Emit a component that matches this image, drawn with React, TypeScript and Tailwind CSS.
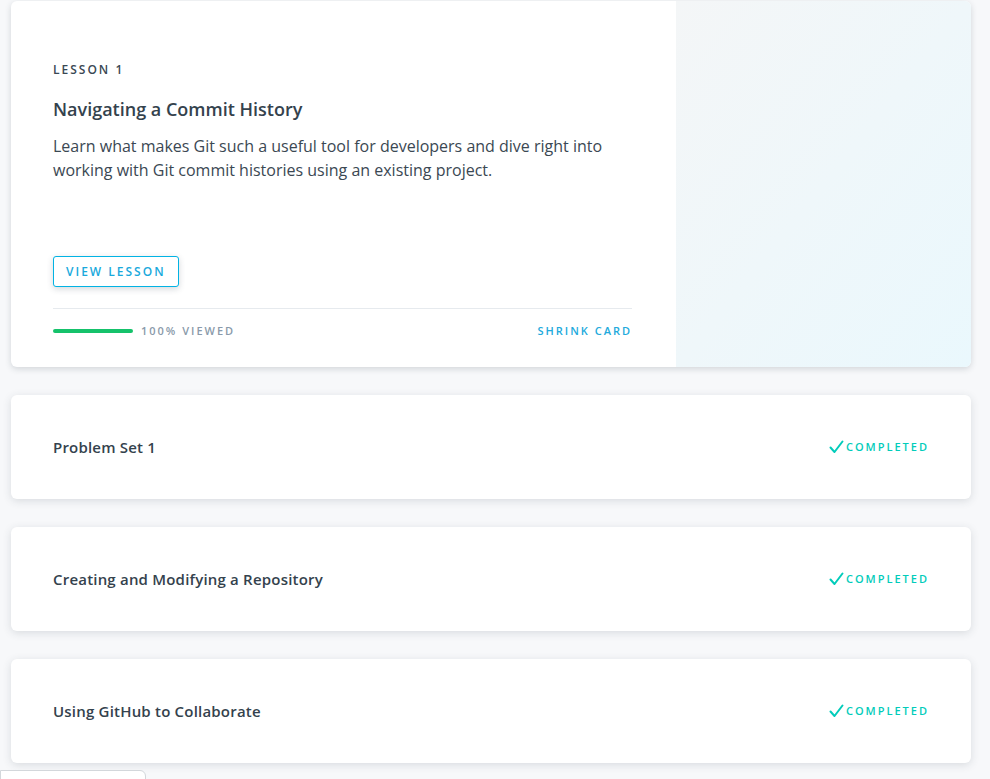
import React from "react";

const concepts = ["Problem Set 1", "Creating and Modifying a Repository", "Using GitHub to Collaborate"];

function CheckIcon() {
  return (
    <svg width="15" height="14" viewBox="0 0 15 14" fill="none" className="mr-[2px]">
      <path d="M1.5 7.5 L5.5 12 L13.5 1.5" stroke="#02ccba" strokeWidth="2" strokeLinecap="round" strokeLinejoin="round" />
    </svg>
  );
}

export default function App() {
  return (
    <div className="min-h-screen bg-[#f7f8fa] text-[#2e3d49]" style={{ fontFamily: '"Open Sans", "Noto Sans", sans-serif' }}>
      <div className="pt-px">
        {/* lesson card */}
        <div className="ml-[11px] w-[960px] h-[366px] flex bg-white rounded-md shadow-[0_2px_6px_rgba(46,61,73,0.18)] overflow-hidden">
          <div className="w-[665px] pl-[42px] pr-[44px] pt-[61px] flex flex-col">
            <p className="text-[12px] leading-4 font-semibold tracking-[2px] text-[#3a4853]">LESSON 1</p>
            <h2 className="mt-[19px] text-[18px] leading-6 font-semibold text-[#34424d]">Navigating a Commit History</h2>
            <p className="mt-[13px] text-[16px] leading-6 text-[#3b4853]">
              Learn what makes Git such a useful tool for developers and dive right into working with Git commit histories using an existing project.
            </p>
            <div className="mt-[74px]">
              <button className="h-[31px] px-3 border border-[#02b3e4] rounded-[3px] text-[12px] font-semibold tracking-[2px] text-[#19a9dc] bg-white shadow-[0_2px_6px_rgba(46,61,73,0.2)]">
                VIEW LESSON
              </button>
            </div>
            <div className="mt-[21px] border-t border-[#e6eaee]" />
            <div className="mt-[14px] flex items-center h-4">
              <div className="w-20 h-1 rounded-full bg-[#15c26b]" />
              <span className="ml-2 text-[11px] font-semibold tracking-[2px] text-[#8a9aaa]">100% VIEWED</span>
              <span className="ml-auto text-[11px] font-semibold tracking-[2px] text-[#22aadc]">SHRINK CARD</span>
            </div>
          </div>
          <div className="flex-1 bg-gradient-to-br from-[#f4f6f7] to-[#eaf8fd]" />
        </div>

        {/* concept cards */}
        {concepts.map((title) => (
          <div
            key={title}
            className="mt-[28px] ml-[11px] w-[960px] h-[104px] flex items-center px-[42px] bg-white rounded-md shadow-[0_2px_8px_rgba(46,61,73,0.15)]"
          >
            <span className="text-[15px] font-semibold tracking-[0.2px] text-[#34424d]">{title}</span>
            <span className="ml-auto flex items-center text-[11px] font-semibold tracking-[2px] text-[#02ccba]">
              <CheckIcon />
              COMPLETED
            </span>
          </div>
        ))}

        <div className="mt-[7px] w-[146px] h-[20px] bg-white border border-[#d3d7db] rounded-tr-md" />
      </div>
    </div>
  );
}
